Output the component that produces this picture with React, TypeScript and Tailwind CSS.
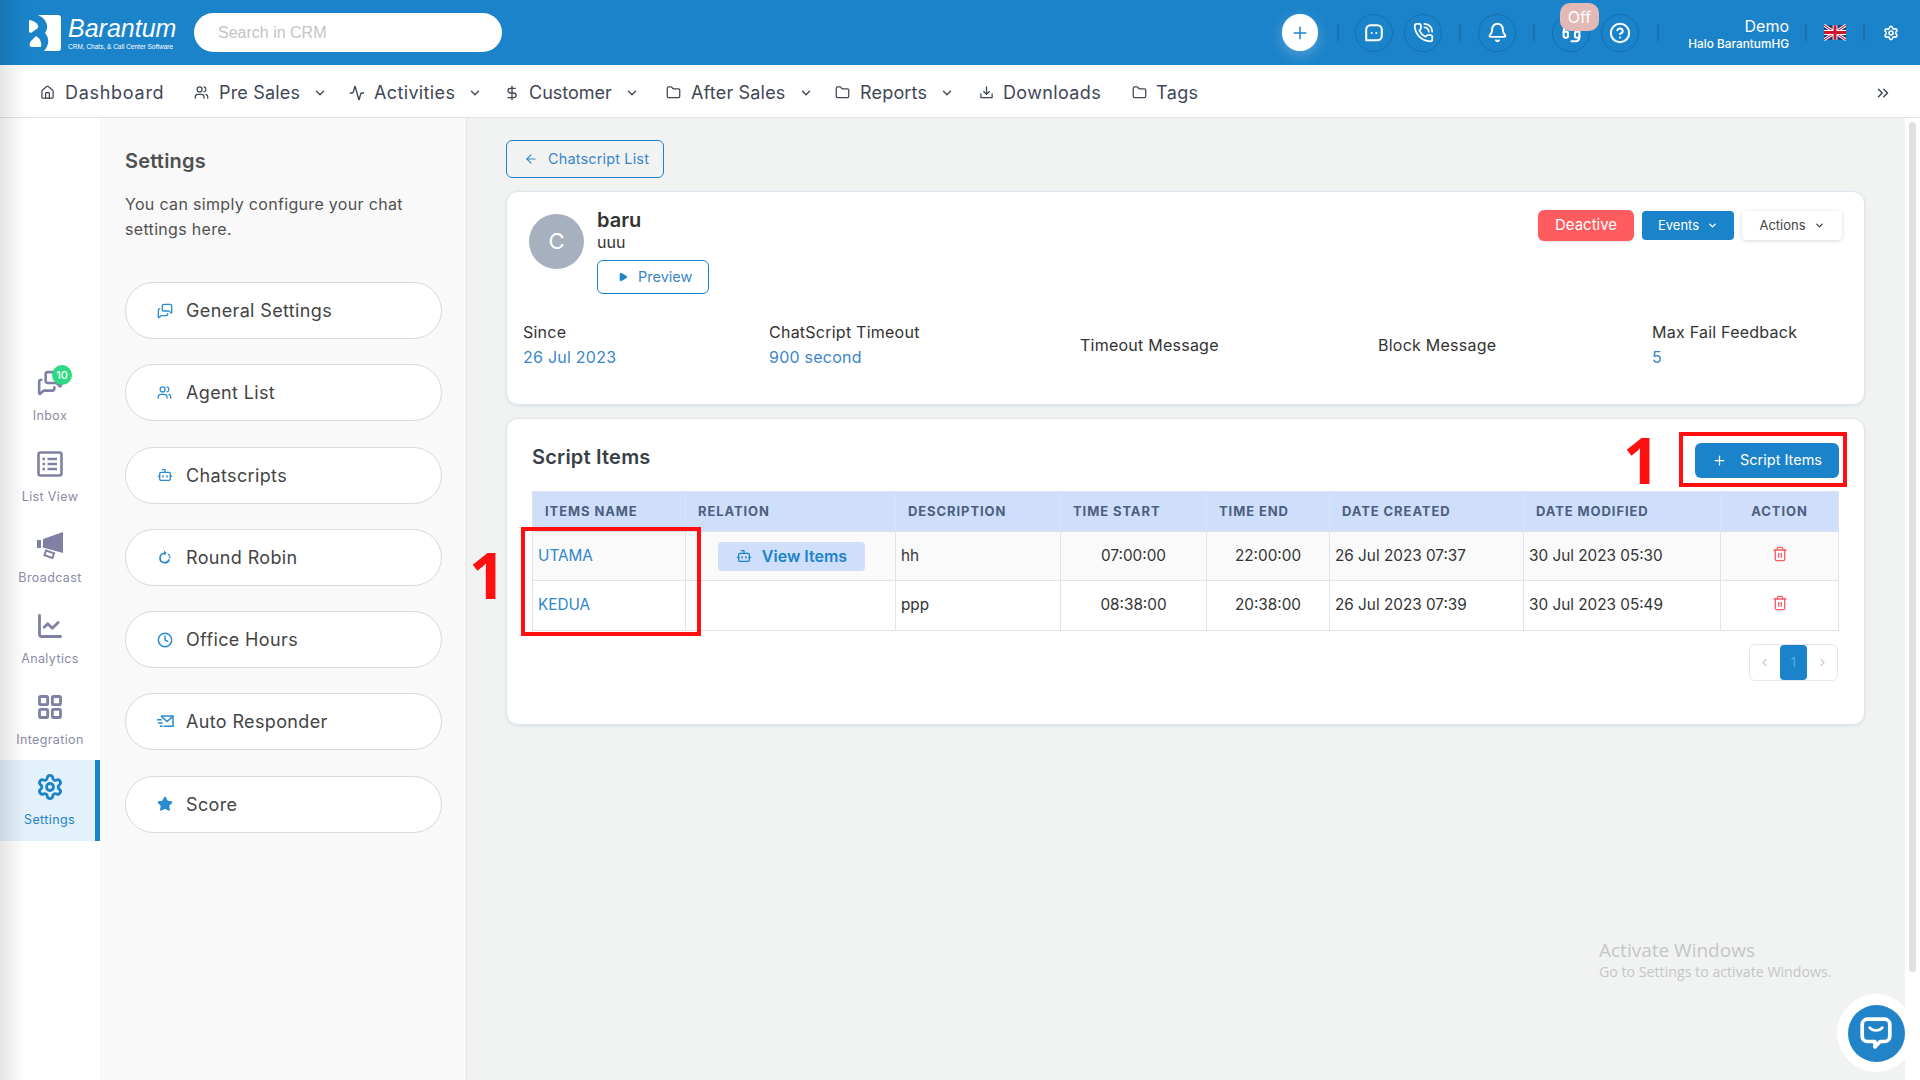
import type { ReactNode } from "react"
import {
  Activity,
  ArrowLeft,
  Bell,
  Bot,
  ChartLine,
  ChevronDown,
  ChevronLeft,
  ChevronRight,
  ChevronsRight,
  CircleHelp,
  Clock,
  DollarSign,
  Folder,
  Headset,
  Home,
  LayoutGrid,
  MessagesSquare,
  PhoneCall,
  Play,
  Plus,
  Settings,
  Star,
  Trash2,
  Users,
} from "lucide-react"

function Sep({ className }: { className: string }) {
  return <span className={`h-[17px] w-[2px] bg-[#1a70aa] ${className}`} />
}

function Ring({ className, children }: { className: string; children: ReactNode }) {
  return (
    <div className={`flex h-[38px] w-[38px] items-center justify-center rounded-full border border-[#176fab] text-white ${className}`}>
      {children}
    </div>
  )
}

function Logo() {
  return (
    <svg viewBox="0 0 32 36" className="h-[36px] w-[32px]" fill="#fff">
      <path d="M9 0H29a3 3 0 0 1 3 3V33a3 3 0 0 1-3 3H15C20 30 21 24 16 18C21 12 17 3 9 0Z" />
      <path d="M0 5C7 6 10 10 9 13L2 18 0 17Z" />
      <path d="M7 21C11 23 13 28 12 32H3C0 32 0 29 2 26Z" />
    </svg>
  )
}

function UkFlag() {
  return (
    <svg viewBox="0 0 60 40" className="h-[17px] w-[22px]">
      <rect width="60" height="40" fill="#1f3a7a" />
      <path d="M0 0L60 40M60 0L0 40" stroke="#fff" strokeWidth="8" />
      <path d="M0 0L60 40M60 0L0 40" stroke="#cf142b" strokeWidth="3" />
      <path d="M30 0V40M0 20H60" stroke="#fff" strokeWidth="13" />
      <path d="M30 0V40M0 20H60" stroke="#cf142b" strokeWidth="8" />
    </svg>
  )
}

function Header() {
  return (
    <header className="flex h-[65px] shrink-0 items-center bg-[#1b83c9] pl-[29px] pr-[21px]">
      <Logo />
      <div className="ml-[7px] flex w-[126px] flex-col text-white">
        <span className="[font-family:'Liberation_Sans',sans-serif] text-[25px] italic leading-[28px]">Barantum</span>
        <span className="[font-family:'Liberation_Sans',sans-serif] text-[6.5px] leading-[9px]">CRM, Chats, &amp; Call Center Software</span>
      </div>
      <div className="flex h-[39px] w-[308px] items-center rounded-full bg-white pl-[24px] [font-family:'Liberation_Sans',sans-serif] text-[16px] text-[#c4c4c4]">
        Search in CRM
      </div>
      <div className="ml-auto flex items-center">
        <div className="flex h-[37px] w-[36px] items-center justify-center rounded-full bg-white text-[#1b83c9] shadow-[0_4px_14px_rgba(255,255,255,0.25)]">
          <Plus size={20} strokeWidth={1.75} />
        </div>
        <Sep className="ml-[19px]" />
        <Ring className="ml-[16px]">
          <svg viewBox="0 0 24 24" className="h-[22px] w-[22px]" fill="none" stroke="#fff" strokeWidth="2.2">
            <path d="M8 3.5h8a4.5 4.5 0 0 1 4.5 4.5v7a5 5 0 0 1-5 5H3.5V8A4.5 4.5 0 0 1 8 3.5Z" strokeLinejoin="round" />
            <circle cx="9.5" cy="12" r="1.1" fill="#fff" stroke="none" />
            <circle cx="14.5" cy="12" r="1.1" fill="#fff" stroke="none" />
          </svg>
        </Ring>
        <Ring className="ml-[11px]">
          <PhoneCall size={21} strokeWidth={2} />
        </Ring>
        <Sep className="ml-[17px]" />
        <Ring className="ml-[17px]">
          <Bell size={21} strokeWidth={2.2} />
        </Ring>
        <Sep className="ml-[17px]" />
        <Ring className="relative ml-[17px]">
          <Headset size={21} strokeWidth={2.4} />
          <span className="absolute -top-[12px] left-[7px] flex h-[28px] w-[39px] items-center justify-center rounded-[10px] bg-[#e2b9b7] text-[16px] text-white">
            Off
          </span>
        </Ring>
        <Ring className="ml-[11px]">
          <CircleHelp size={22} strokeWidth={2.2} />
        </Ring>
        <Sep className="ml-[18px]" />
        <div className="ml-[20px] mt-[3px] flex w-[110px] flex-col items-end text-white">
          <span className="text-[16px] leading-[20px]">Demo</span>
          <span className="mt-[1px] whitespace-nowrap text-[11.800px] font-medium leading-[15px]">Halo BarantumHG</span>
        </div>
        <Sep className="ml-[16px]" />
        <div className="ml-[17px]">
          <UkFlag />
        </div>
        <Sep className="ml-[17px]" />
        <Settings size={16} strokeWidth={2.4} className="ml-[18px] text-white" />
      </div>
    </header>
  )
}

const navItems = [
  { label: "Dashboard", icon: <Home size={15} />, width: "w-[154px]", text: "tracking-[0.04em]", iconBox: "w-[25px]" },
  { label: "Pre Sales", icon: <Users size={15} />, chevron: true, width: "w-[155px]", text: "tracking-[0.01em]", iconBox: "w-[25px]" },
  { label: "Activities", icon: <Activity size={16} />, chevron: true, width: "w-[157px]", text: "tracking-[0.02em]", iconBox: "w-[25px]" },
  { label: "Customer", icon: <DollarSign size={16} className="-ml-[2px]" />, chevron: true, width: "w-[160px]", text: "", iconBox: "w-[23px]" },
  { label: "After Sales", icon: <Folder size={15} />, chevron: true, width: "w-[169px]", text: "tracking-[0.01em]", iconBox: "w-[25px]" },
  { label: "Reports", icon: <Folder size={15} />, chevron: true, width: "w-[144px]", text: "tracking-[0.01em]", iconBox: "w-[25px]" },
  {
    label: "Downloads",
    icon: (
      <svg viewBox="0 0 24 24" className="h-[15px] w-[15px]" fill="none" stroke="currentColor" strokeWidth="2" strokeLinecap="round" strokeLinejoin="round">
        <path d="M12 3v12M7.5 10.5 12 15l4.5-4.5M3 14v6h18v-6" />
      </svg>
    ),
    width: "w-[153px]",
    text: "tracking-[0.02em]",
    iconBox: "w-[24px]",
  },
  { label: "Tags", icon: <Folder size={15} />, width: "w-[90px]", text: "tracking-[0.02em]", iconBox: "w-[24px]" },
]

function NavBar() {
  return (
    <nav className="flex h-[53px] shrink-0 items-center border-b border-[#dfe1e3] bg-white pl-[40px] pr-[28px] pt-[3px] text-[#3f4756]">
      {navItems.map((item) => (
        <div key={item.label} className={`flex shrink-0 items-center ${item.width}`}>
          <span className={`flex shrink-0 ${item.iconBox}`}>{item.icon}</span>
          <span className={`text-[18px] ${item.text}`}>{item.label}</span>
          {item.chevron && <ChevronDown size={14} strokeWidth={2.4} className="ml-[13px]" />}
        </div>
      ))}
      <ChevronsRight size={18} className="ml-auto" />
    </nav>
  )
}

function ListIcon() {
  return (
    <svg viewBox="0 0 26 26" className="h-[26px] w-[26px]" fill="none" stroke="currentColor" strokeWidth="2.6">
      <rect x="1.5" y="1.5" width="23" height="23" rx="2" />
      <path d="M10.5 8H20M10.5 13H20M10.5 18H20" />
      <path d="M5.5 8H8M5.5 13H8M5.5 18H8" />
    </svg>
  )
}

function MegaphoneIcon() {
  return (
    <svg viewBox="0 0 28 28" className="h-[28px] w-[28px]" fill="currentColor">
      <path d="M1 9h4v8H1z" />
      <path d="M7 8 27 1v21L7 16.500z" />
      <path d="M10 19.500l8 2.800-1.500 4.700-8-2.800z" fill="none" stroke="currentColor" strokeWidth="2" />
    </svg>
  )
}

const railItems = [
  { label: "Inbox", icon: <MessagesSquare size={26} strokeWidth={2.4} className="-scale-x-100" /> },
  { label: "List View", icon: <ListIcon /> },
  { label: "Broadcast", icon: <MegaphoneIcon /> },
  { label: "Analytics", icon: <ChartLine size={28} strokeWidth={2.4} /> },
  { label: "Integration", icon: <LayoutGrid size={28} strokeWidth={2.4} /> },
]

function Rail() {
  return (
    <aside className="flex w-[100px] shrink-0 flex-col bg-white pt-[238px]">
      {railItems.map((item) => (
        <div key={item.label} className="relative flex h-[81px] flex-col items-center pt-[13px] text-[#7f80a3]">
          <div className="flex h-[28px] items-center">{item.icon}</div>
          <span className="mt-[11px] text-[12.5px] leading-[16px] tracking-[0.03em] text-[#8a8ba8]">{item.label}</span>
          {item.label === "Inbox" && (
            <span className="absolute left-[52px] top-[9px] flex h-[20px] w-[20px] items-center justify-center rounded-full bg-[#2fd882] text-[11px] font-medium text-white">
              10
            </span>
          )}
        </div>
      ))}
      <div className="-mt-[1px] flex h-[81px] flex-col items-center border-r-[5px] border-[#1b83c9] bg-[#e3f1fb] pl-[4px] pt-[13px] text-[#1b83c9]">
        <div className="flex h-[28px] items-center">
          <Settings size={28} strokeWidth={2.4} />
        </div>
        <span className="mt-[11px] text-[12.5px] leading-[16px] tracking-[0.03em]">Settings</span>
      </div>
    </aside>
  )
}

function RoundRobinIcon() {
  return (
    <svg viewBox="0 0 16 16" className="h-[15px] w-[15px]" fill="none" stroke="currentColor" strokeWidth="1.8">
      <path d="M8 3.500A5 5 0 1 0 13 10" />
      <path d="M13.500 7.500v.5M12.500 5l.3.4" strokeLinecap="round" />
      <path d="M7.500.5 10.500 3.500 7.500 5.500z" fill="currentColor" stroke="none" />
    </svg>
  )
}

function ResponderIcon() {
  return (
    <svg viewBox="0 0 18 16" className="h-[15px] w-[17px]" fill="none" stroke="currentColor" strokeWidth="1.6">
      <path d="M4 2h13v11H7" />
      <path d="m4.500 2.500 6.200 5.500 6-5.500" />
      <path d="M0 6h5M1 9.500h5M3 13h3" />
    </svg>
  )
}

const settingsItems = [
  { label: "General Settings", icon: <MessagesSquare size={16} className="-scale-x-100" /> },
  { label: "Agent List", icon: <Users size={15} /> },
  { label: "Chatscripts", icon: <Bot size={16} /> },
  { label: "Round Robin", icon: <RoundRobinIcon /> },
  { label: "Office Hours", icon: <Clock size={16} strokeWidth={2.2} /> },
  { label: "Auto Responder", icon: <ResponderIcon /> },
  { label: "Score", icon: <Star size={16} fill="currentColor" /> },
]

function SettingsPanel() {
  return (
    <section className="w-[367px] shrink-0 border-r border-[#e6e6e6] bg-[#f9f9f9] pl-[25px] pt-[29px]">
      <h2 className="text-[20px] font-semibold leading-[28px] tracking-[0.01em] text-[#505050]">Settings</h2>
      <p className="mt-[17px] w-[300px] text-[16px] leading-[25px] tracking-[0.02em] text-[#505050]">You can simply configure your chat settings here.</p>
      <div className="mt-[40px] flex w-[317px] flex-col gap-[25.300px]">
        {settingsItems.map((item) => (
          <div key={item.label} className="flex h-[57px] items-center rounded-full border border-[#d9d9d9] bg-white pl-[31px]">
            <span className="flex w-[29px] text-[#2a8bd0]">{item.icon}</span>
            <span className="text-[18px] tracking-[0.02em] text-[#444]">{item.label}</span>
          </div>
        ))}
      </div>
    </section>
  )
}

function InfoCell({ title, value }: { title: string; value?: string }) {
  return (
    <div className="flex flex-col gap-[5px] text-[16px] leading-[20px] tracking-[0.015em]">
      <span className="text-[#333]">{title}</span>
      {value && <span className="text-[#3a86c8]">{value}</span>}
    </div>
  )
}

function ProfileCard() {
  return (
    <div className="mt-[13px] h-[214px] rounded-[12px] border border-[#dfe6ee] bg-white pl-[16px] pr-[17px] pt-[22px] shadow-[0_1px_3px_rgba(40,70,110,0.12)]">
      <div className="flex items-start justify-between pr-[5px]">
        <div className="ml-[6px] flex gap-[13px]">
          <div className="flex h-[55px] w-[55px] items-center justify-center rounded-full bg-[#a7b0bf] text-[22px] text-white">C</div>
          <div className="-mt-[5px] flex flex-col items-start">
            <span className="text-[20px] font-semibold leading-[23px] text-[#333]">baru</span>
            <span className="text-[16px] leading-[20px] text-[#333]">uuu</span>
            <button className="mt-[8px] flex h-[34px] w-[112px] items-center rounded-[6px] border border-[#1b83c9] pl-[20px] text-[14.500px] text-[#3a86c8]">
              <Play size={10} fill="#1b83c9" stroke="#1b83c9" className="mr-[10px]" />
              Preview
            </button>
          </div>
        </div>
        <div className="-mt-[4px] flex items-center gap-[8px] text-[14px]">
          <button className="h-[31px] w-[96px] rounded-[6px] bg-[#ff5c5f] text-[15px] text-white shadow-sm">Deactive</button>
          <button className="flex h-[29px] w-[92px] items-center justify-center gap-[8px] rounded-[4px] bg-[#1b83c9] text-[13px] text-white">
            Events
            <ChevronDown size={11} strokeWidth={3} />
          </button>
          <button className="flex h-[29px] w-[100px] items-center justify-center gap-[8px] rounded-[4px] bg-white text-[13px] text-[#444] shadow-[0_1px_4px_rgba(0,0,0,0.16)]">
            Actions
            <ChevronDown size={11} strokeWidth={3} />
          </button>
        </div>
      </div>
      <div className="mt-[28px] grid grid-cols-[246px_311px_298px_274px_1fr] items-center">
        <InfoCell title="Since" value="26 Jul 2023" />
        <InfoCell title="ChatScript Timeout" value="900 second" />
        <InfoCell title="Timeout Message" />
        <InfoCell title="Block Message" />
        <InfoCell title="Max Fail Feedback" value="5" />
      </div>
    </div>
  )
}

const columns = ["ITEMS NAME", "RELATION", "DESCRIPTION", "TIME START", "TIME END", "DATE CREATED", "DATE MODIFIED", "ACTION"]

const rows = [
  { name: "UTAMA", relation: true, description: "hh", start: "07:00:00", end: "22:00:00", created: "26 Jul 2023 07:37", modified: "30 Jul 2023 05:30" },
  { name: "KEDUA", relation: false, description: "ppp", start: "08:38:00", end: "20:38:00", created: "26 Jul 2023 07:39", modified: "30 Jul 2023 05:49" },
]

const cell = "border border-[#dfe3ea] text-[15.300px] text-[#333]"

function ScriptTable() {
  return (
    <table className="w-[1306px] table-fixed border-collapse">
      <colgroup>
        <col className="w-[153px]" />
        <col className="w-[210px]" />
        <col className="w-[165px]" />
        <col className="w-[146px]" />
        <col className="w-[123px]" />
        <col className="w-[194px]" />
        <col className="w-[197px]" />
        <col className="w-[118px]" />
      </colgroup>
      <thead>
        <tr className="h-[40px] bg-[#cfdefa]">
          {columns.map((c) => (
            <th
              key={c}
              className={`border border-[#dbe3f0] px-[12px] text-[13px] font-bold tracking-[0.07em] text-[#4c5f80] ${c === "ACTION" ? "text-center" : "text-left"}`}
            >
              {c}
            </th>
          ))}
        </tr>
      </thead>
      <tbody>
        {rows.map((r, i) => (
          <tr key={r.name} className={i === 0 ? "h-[49px] bg-[#fafafa]" : "h-[50px] bg-white"}>
            <td className={`${cell} pl-[5px] !text-[#2f86cc]`}>{r.name}</td>
            <td className={`${cell} pl-[32px]`}>
              {r.relation && (
                <span className="flex h-[29px] w-[147px] items-center justify-center gap-[10px] rounded-[4px] bg-[#cfdefa] text-[16px] font-semibold text-[#1b83c9]">
                  <Bot size={16} />
                  View Items
                </span>
              )}
            </td>
            <td className={`${cell} pl-[5px]`}>{r.description}</td>
            <td className={`${cell} text-center`}>{r.start}</td>
            <td className={`${cell} text-center`}>{r.end}</td>
            <td className={`${cell} pl-[5px]`}>{r.created}</td>
            <td className={`${cell} pl-[5px]`}>{r.modified}</td>
            <td className={`${cell} text-center`}>
              <Trash2 size={16} className="mx-auto -mt-[5px] text-[#ff5c68]" />
            </td>
          </tr>
        ))}
      </tbody>
    </table>
  )
}

function ScriptItemsCard() {
  return (
    <div className="mt-[13px] h-[307px] rounded-[12px] border border-[#dfe6ee] bg-white pl-[25px] shadow-[0_1px_3px_rgba(40,70,110,0.12)]">
      <div className="flex h-[72px] items-center justify-between pr-[25px]">
        <h3 className="pt-[4px] text-[20px] font-semibold tracking-[0.01em] text-[#3a3f47]">Script Items</h3>
        <button className="mt-[10px] flex h-[35px] w-[144px] items-center justify-center gap-[13px] rounded-[6px] bg-[#1b83c9] text-[14.500px] text-white">
          <Plus size={15} />
          Script Items
        </button>
      </div>
      <ScriptTable />
      <div className="mt-[13px] flex w-[1306px] justify-end">
        <div className="flex h-[37px] w-[89px] items-stretch justify-between rounded-[6px] border border-[#e3e7ec] text-[#c8ccd2]">
          <span className="flex w-[30px] items-center justify-center">
            <ChevronLeft size={13} />
          </span>
          <span className="flex w-[28px] items-center justify-center rounded-[4px] bg-[#1b83c9] text-[13px] text-[#4db0ea]">1</span>
          <span className="flex w-[30px] items-center justify-center">
            <ChevronRight size={13} />
          </span>
        </div>
      </div>
    </div>
  )
}

function Annotations() {
  return (
    <>
      <div className="pointer-events-none absolute left-[1679px] top-[432px] h-[55px] w-[168px] border-[4px] border-[#ff0f0f]" />
      <div className="pointer-events-none absolute left-[521px] top-[527px] h-[109px] w-[180px] border-[4px] border-[#ff0f0f]" />
      <span className="absolute left-[1623px] top-[424px] [font-family:'Open_Sans',sans-serif] text-[64px] font-bold leading-[72px] text-[#ff0f0f]">1</span>
      <span className="absolute left-[469px] top-[539px] [font-family:'Open_Sans',sans-serif] text-[64px] font-bold leading-[72px] text-[#ff0f0f]">1</span>
    </>
  )
}

export default function App() {
  return (
    <div className="relative flex h-[1080px] w-[1920px] flex-col overflow-hidden bg-white [font-family:Inter,sans-serif]">
      <Header />
      <NavBar />
      <div className="flex min-h-0 flex-1">
        <Rail />
        <SettingsPanel />
        <main className="flex-1 bg-[#f1f3f3] pl-[39px] pr-[40px] pt-[22px]">
          <button className="flex h-[38px] w-[158px] items-center rounded-[6px] border border-[#1b83c9] pl-[17px] text-[14.500px] tracking-[0.01em] text-[#3a86c8]">
            <ArrowLeft size={14} className="mr-[10px]" />
            Chatscript List
          </button>
          <ProfileCard />
          <ScriptItemsCard />
        </main>
        <div className="flex w-[15px] shrink-0 justify-center bg-white pt-[4px]">
          <div className="h-[850px] w-[7px] rounded-full bg-[#e0e0e0]" />
        </div>
      </div>
      <Annotations />
      <div className="pointer-events-none absolute left-0 top-0 h-full w-[26px] bg-gradient-to-r from-black/10 to-transparent" />
      <div className="absolute left-[1599px] top-[938px] [font-family:'Open_Sans',sans-serif] text-[#c4c6c6]">
        <div className="text-[19px] leading-[24px]">Activate Windows</div>
        <div className="text-[14.200px] leading-[20px]">Go to Settings to activate Windows.</div>
      </div>
      <div className="absolute left-[1837px] top-[994px] flex h-[78px] w-[78px] items-center justify-center rounded-full bg-white">
        <div className="flex h-[57px] w-[57px] items-center justify-center rounded-full bg-[#2284c8]">
          <svg viewBox="0 0 32 32" className="h-[34px] w-[34px]" fill="none" stroke="#fff" strokeWidth="3.5" strokeLinejoin="round">
            <path d="M8 3h16a5 5 0 0 1 5 5v11a5 5 0 0 1-5 5h-4l-5 5v-5H8a5 5 0 0 1-5-5V8a5 5 0 0 1 5-5Z" />
            <path d="M10 11c3 3.500 9 3.500 12 0" strokeLinecap="round" strokeWidth="2.4" />
          </svg>
        </div>
      </div>
    </div>
  )
}
